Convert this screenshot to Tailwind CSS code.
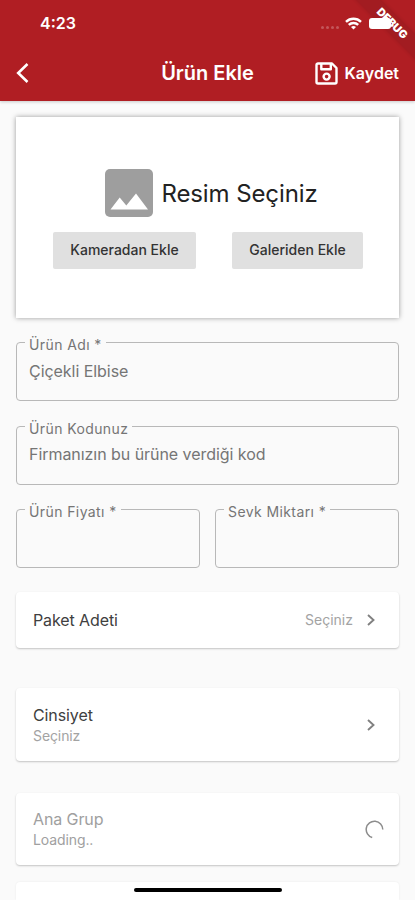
<!DOCTYPE html>
<html lang="tr">
<head>
<meta charset="utf-8">
<meta name="viewport" content="width=device-width, initial-scale=1">
<title>Ürün Ekle</title>
<script src="https://cdn.jsdelivr.net/npm/@tailwindcss/browser@4"></script>
</head>
<body class="relative flex h-[900px] w-[415px] flex-col overflow-hidden bg-[#fafafa] font-['Inter',sans-serif] text-[#404040]">
<header class="relative z-10 flex h-[101px] shrink-0 flex-col overflow-hidden bg-[#b01e23] text-white shadow-[0_1px_3px_rgba(0,0,0,0.2)]">
  <div class="relative z-10 flex h-[46px] items-center pl-[40px] pr-[24px]">
    <span class="text-[16px] leading-[20px] font-semibold">4:23</span>
    <div class="ml-auto flex items-center">
      <div class="mt-[8px] mr-[6px] flex gap-[2px]">
        <i class="size-[3px] rounded-full bg-white/25"></i><i class="size-[3px] rounded-full bg-white/25"></i><i class="size-[3px] rounded-full bg-white/25"></i><i class="size-[3px] rounded-full bg-white/25"></i>
      </div>
      <svg class="mr-[7px] h-[13px] w-[17px]" viewBox="0 0 17 13" fill="none" stroke="#fff" stroke-width="2.400"><path d="M1 4.800a10.800 10.800 0 0 1 15 0M3.800 7.900a6.700 6.700 0 0 1 9.400 0"/><path d="M8.500 12.600 6 10.100a3.600 3.600 0 0 1 5 0z" fill="#fff" stroke="none"/></svg>
      <div class="h-[11px] w-[22px] rounded-[3px] bg-white"></div>
    </div>
  </div>
  <div class="grid h-[54px] grid-cols-[1fr_auto_1fr] items-center px-[16px]">
    <svg class="h-[22px] w-[14px]" viewBox="0 0 14 22" fill="none" stroke="#fff" stroke-width="2.600"><path d="M11.500 2 2.200 11l9.300 9"/></svg>
    <h1 class="text-[20px] leading-[24px] font-semibold">Ürün Ekle</h1>
    <div class="flex items-center justify-end gap-[7px]">
      <svg class="size-[23px]" viewBox="0 0 23 23" fill="none" stroke="#fff" stroke-width="2.400" stroke-linejoin="round"><path d="M3 1.500h14l4.500 4.500v14a1.500 1.500 0 0 1-1.500 1.500H3A1.500 1.500 0 0 1 1.500 20V3A1.500 1.500 0 0 1 3 1.500z"/><path d="M6.300 2v5.200h9.500V2"/><circle cx="11.600" cy="14.600" r="3"/></svg>
      <span class="text-[16px] leading-[20px] font-semibold">Kaydet</span>
    </div>
  </div>
  <div class="absolute top-[15px] left-[340px] flex h-[17px] w-[104px] rotate-45 items-center justify-center bg-[#a21c21] text-[11px] font-black text-white shadow-[0_0_4px_rgba(0,0,0,0.15)]">DEBUG</div>
</header>
<main class="flex min-h-0 flex-1 flex-col px-[16px] pt-[16px] *:shrink-0">
  <section class="flex h-[201px] flex-col items-center bg-white pt-[52px] shadow-[0_0_5px_rgba(0,0,0,0.38)]">
    <div class="flex items-center gap-[8px] pl-[8px]">
      <svg class="size-[48px]" viewBox="0 0 48 48"><rect width="48" height="48" rx="5" fill="#9e9e9e"/><path d="M5.500 40.500 14.700 28.500 21.300 36.500 31 24.500 43 40.500z" fill="#fff"/></svg>
      <span class="pt-[2px] text-[24px] leading-[30px] tracking-[-0.1px] text-[#222]">Resim Seçiniz</span>
    </div>
    <div class="mt-[15px] flex w-full justify-between pr-[36px] pl-[37px]">
      <div class="flex h-[37px] w-[143px] items-center justify-center rounded-[2px] bg-[#e0e0e0] pb-[3px] text-[14px] font-medium text-[#333]">Kameradan Ekle</div>
      <div class="flex h-[37px] w-[131px] items-center justify-center rounded-[2px] bg-[#e0e0e0] pb-[3px] text-[14px] font-medium text-[#333]">Galeriden Ekle</div>
    </div>
  </section>
  <fieldset class="mt-[16px] h-[67px] rounded-[4px] border border-[#b8b8b8] px-[8px] text-[#757575]">
    <legend class="px-[4px] text-[14px] leading-[17px] tracking-[0.4px]"><span class="relative top-[2px]">Ürün Adı *</span></legend>
    <p class="px-[4px] pt-[10px] text-[16px] leading-[20px] tracking-[-0.050px]">Çiçekli Elbise</p>
  </fieldset>
  <fieldset class="mt-[17px] h-[67px] rounded-[4px] border border-[#b8b8b8] px-[8px] text-[#757575]">
    <legend class="px-[4px] text-[14px] leading-[17px] tracking-[0.4px]"><span class="relative top-[2px]">Ürün Kodunuz</span></legend>
    <p class="px-[4px] pt-[9px] text-[16px] leading-[20px] tracking-[-0.050px]">Firmanızın bu ürüne verdiği kod</p>
  </fieldset>
  <div class="mt-[16px] flex gap-[15px]">
    <fieldset class="h-[67px] flex-1 rounded-[4px] border border-[#b8b8b8] px-[8px] text-[#757575]">
      <legend class="px-[4px] text-[14px] leading-[17px] tracking-[0.4px]"><span class="relative top-[2px]">Ürün Fiyatı *</span></legend>
    </fieldset>
    <fieldset class="h-[67px] flex-1 rounded-[4px] border border-[#b8b8b8] px-[8px] text-[#757575]">
      <legend class="px-[4px] text-[14px] leading-[17px] tracking-[0.4px]"><span class="relative top-[2px]">Sevk Miktarı *</span></legend>
    </fieldset>
  </div>
  <section class="mt-[24px] flex h-[56px] items-center rounded-[4px] bg-white pr-[24px] pl-[17px] shadow-[0_1px_2px_rgba(0,0,0,0.22)]">
    <span class="text-[16px] leading-[20px] tracking-[-0.1px]">Paket Adeti</span>
    <span class="mr-[14px] ml-auto text-[14px] leading-[18px] text-[#a3a3a3]">Seçiniz</span>
    <svg class="h-[12px] w-[8px]" viewBox="0 0 8 12" fill="none" stroke="#808080" stroke-width="1.900"><path d="m1 1 5.500 5L1 11"/></svg>
  </section>
  <section class="mt-[40px] flex h-[73px] items-center justify-between rounded-[4px] bg-white pr-[24px] pl-[17px] shadow-[0_1px_2px_rgba(0,0,0,0.22)]">
    <div>
      <p class="text-[16px] leading-[20px] tracking-[-0.1px]">Cinsiyet</p>
      <p class="mt-[1px] text-[14px] leading-[19px] tracking-[-0.1px] text-[#a3a3a3]">Seçiniz</p>
    </div>
    <svg class="h-[12px] w-[8px]" viewBox="0 0 8 12" fill="none" stroke="#808080" stroke-width="1.900"><path d="m1 1 5.500 5L1 11"/></svg>
  </section>
  <section class="mt-[32px] flex h-[72px] items-center justify-between rounded-[4px] bg-white pr-[15px] pl-[17px] shadow-[0_1px_2px_rgba(0,0,0,0.22)]">
    <div class="text-[#a0a0a0]">
      <p class="text-[16px] leading-[20px] tracking-[-0.1px]">Ana Grup</p>
      <p class="mt-[1px] text-[14px] leading-[19px] tracking-[-0.1px]">Loading..</p>
    </div>
    <svg class="size-[19px]" viewBox="0 0 19 19" fill="none" stroke="#8c8c8c" stroke-width="1.500"><path d="M17.800 9.500A8.300 8.300 0 1 0 7.200 17.500"/></svg>
  </section>
  <section class="mt-[17px] h-[18px] rounded-t-[4px] bg-white shadow-[0_0_2px_rgba(0,0,0,0.08)]"></section>
</main>
<div class="absolute top-[888px] left-[134px] h-[4px] w-[148px] rounded-full bg-black"></div>
</body>
</html>
